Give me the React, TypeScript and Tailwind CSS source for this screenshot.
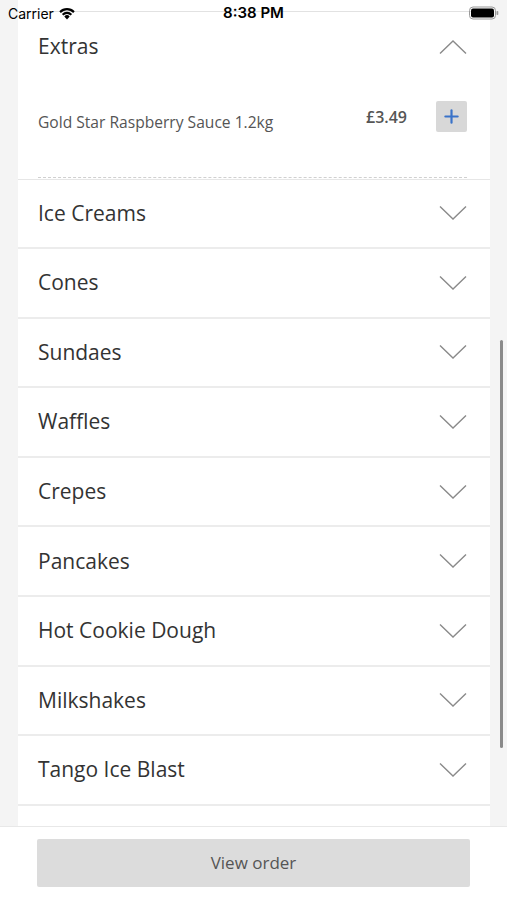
import { Plus } from "lucide-react";

const categories = [
  "Ice Creams",
  "Cones",
  "Sundaes",
  "Waffles",
  "Crepes",
  "Pancakes",
  "Hot Cookie Dough",
  "Milkshakes",
  "Tango Ice Blast",
  "",
];

const Chevron = ({ up = false }: { up?: boolean }) => (
  <svg width="28" height="16" viewBox="0 0 28 16" className="shrink-0">
    <path
      d={up ? "M1 14.5 L14 2 L27 14.5" : "M1 1.5 L14 14 L27 1.5"}
      fill="none"
      stroke="#8a8a8a"
      strokeWidth="1.4"
    />
  </svg>
);

const StatusBar = () => (
  <div className="absolute top-0 left-0 right-0 h-[26px] flex items-center justify-between px-2 font-['Inter',sans-serif] text-black">
    <div className="flex items-center gap-1 text-[14px]">
      <span>Carrier</span>
      <svg width="18" height="13" viewBox="0 0 18 13">
        <path d="M9 12.5 L6.3 9.4 A3.8 3.8 0 0 1 11.7 9.4 Z" fill="#000" />
        <path d="M3.9 6.9 A7.2 7.2 0 0 1 14.1 6.9 L12.6 8.5 A5 5 0 0 0 5.4 8.5 Z" fill="#000" />
        <path d="M1.3 4.3 A10.8 10.8 0 0 1 16.7 4.3 L15.2 5.9 A8.6 8.6 0 0 0 2.8 5.9 Z" fill="#000" />
      </svg>
    </div>
    <span className="absolute left-1/2 -translate-x-1/2 text-[15px] font-semibold">8:38 PM</span>
    <svg width="30" height="14" viewBox="0 0 30 14">
      <rect x="0.5" y="1" width="26" height="12" rx="3.5" fill="none" stroke="#999" />
      <rect x="2" y="2.5" width="23" height="9" rx="2" fill="#000" />
      <rect x="27.5" y="5" width="1.8" height="4" rx="0.8" fill="#999" />
    </svg>
  </div>
);

export default function App() {
  return (
    <div className="relative w-[507px] h-[900px] overflow-hidden bg-[#f4f4f4] flex flex-col font-['Open_Sans',sans-serif]">
      <div className="flex-1 min-h-0 overflow-hidden px-[18px] pr-[17px]">
        <div className="bg-white">
          <div className="h-[12px] border-b border-[#e2e2e2]" />
          <div className="h-[69.5px] flex items-center justify-between pl-[20px] pr-[23px]">
            <span className="text-[21px] text-[#333]">Extras</span>
            <Chevron up />
          </div>
          <div className="h-[97px] pl-[20px] pr-[23px] flex flex-col">
            <div className="flex items-start h-[80px]">
              <span className="flex-1 text-[15.6px] leading-[20px] text-[#555] mt-[30px]">
                Gold Star Raspberry Sauce 1.2kg
              </span>
              <span className="text-[16px] leading-[20px] font-semibold text-[#555] mr-[29px] mt-[25px]">£3.49</span>
              <button className="w-[31px] h-[31px] mt-[19px] bg-[#d8d8d8] rounded-[2px] flex items-center justify-center">
                <Plus size={21} strokeWidth={2.5} color="#3a73c9" />
              </button>
            </div>
            <div className="mt-auto border-b border-dashed border-[#d0d0d0] mb-[1px]" />
          </div>
          <div className="border-t border-[#e6e6e6]">
            {categories.map((c, i) => (
              <div
                key={i}
                className="h-[69.6px] flex items-center justify-between pl-[20px] pr-[23px] border-b-2 border-[#ececec]"
              >
                <span className="text-[21px] text-[#333]">{c}</span>
                {c && <Chevron />}
              </div>
            ))}
          </div>
        </div>
      </div>
      <div className="h-[74px] shrink-0 bg-white border-t border-[#e8e8e8] flex items-start justify-center pt-[12px]">
        <button className="w-[433px] h-[48px] bg-[#dcdcdc] rounded-[2px] text-[17px] text-[#555]">
          View order
        </button>
      </div>
      <StatusBar />
      <div className="absolute left-[500px] top-[340px] w-[3px] h-[408px] rounded-full bg-[#8a8a8a]" />
    </div>
  );
}
